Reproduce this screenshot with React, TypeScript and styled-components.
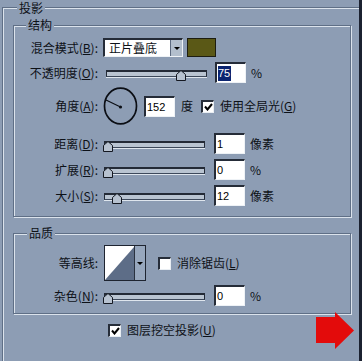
import React from "react";
import styled, { createGlobalStyle, css } from "styled-components";

const BG = "#8d9db4";
const DARK = "#5f6f86";
const LIGHT = "#dbe3ec";
const INK = "#0d1117";

const Global = createGlobalStyle`
  html, body { margin: 0; padding: 0; background: ${BG}; }
  body {
    font-family: "Noto Sans CJK SC", "Noto Sans", sans-serif;
    font-size: 12px;
    color: ${INK};
  }
`;

const etched = css`
  border: 1px solid ${DARK};
  box-shadow: inset 1px 1px 0 ${LIGHT}, 1px 1px 0 ${LIGHT};
`;

const sunken = css`
  border-style: solid;
  border-width: 2px 1px 1px 2px;
  border-color: #252c38 #eef2f6 #eef2f6 #252c38;
  background: #fff;
`;

const Page = styled.div`
  position: relative;
  width: 362px;
  height: 361px;
  box-sizing: border-box;
  overflow: hidden;
  background: ${BG};
  padding: 7px 0 0 2px;
  border-right: 3px solid #1b2130;
`;

const OuterGroup = styled.section`
  display: flex;
  flex-direction: column;
  box-sizing: border-box;
  height: 360px;
  border-top: 1px solid ${DARK};
  border-left: 1px solid ${DARK};
  box-shadow: inset 1px 1px 0 ${LIGHT};
  padding-left: 10px;
`;

const GroupTitle = styled.div<{ $ml: number; $mt?: number }>`
  align-self: flex-start;
  margin: ${(p) => p.$mt ?? -7}px 0 0 ${(p) => p.$ml}px;
  padding: 0 2px;
  height: 12px;
  line-height: 12px;
  background: ${BG};
  white-space: nowrap;
`;

const Group = styled.section<{ $h: number; $mt: number }>`
  display: flex;
  flex-direction: column;
  box-sizing: border-box;
  flex: none;
  width: 338px;
  height: ${(p) => p.$h}px;
  margin-top: ${(p) => p.$mt}px;
  ${etched}
`;

const Row = styled.div<{ $h: number; $mt: number }>`
  display: flex;
  align-items: center;
  flex: none;
  height: ${(p) => p.$h}px;
  margin-top: ${(p) => p.$mt}px;
`;

const Label = styled.span`
  flex: none;
  width: 84px;
  text-align: right;
  white-space: nowrap;
  line-height: 12px;
`;

const Text = styled.span<{ $ml: number }>`
  flex: none;
  margin-left: ${(p) => p.$ml}px;
  white-space: nowrap;
  line-height: 12px;
`;

const Select = styled.div`
  display: flex;
  flex: none;
  width: 80px;
  height: 19px;
  margin-left: 5px;
  box-sizing: border-box;
  ${sunken}
`;

const SelectText = styled.span`
  flex: 1;
  padding-left: 4px;
  line-height: 16px;
  white-space: nowrap;
`;

const SelectButton = styled.span`
  display: flex;
  align-items: center;
  justify-content: center;
  width: 11px;
  background: #b3bfcd;
  border-left: 1px solid #5c6a80;
`;

const DownArrow = styled.span`
  width: 0;
  height: 0;
  border-left: 3px solid transparent;
  border-right: 3px solid transparent;
  border-top: 3px solid #000;
`;

const Swatch = styled.div`
  flex: none;
  width: 29px;
  height: 19px;
  margin-left: 4px;
  box-sizing: border-box;
  background: #5a5816;
  border: 1px solid #1d1d10;
`;

const SliderBox = styled.div<{ $ml: number }>`
  position: relative;
  flex: none;
  width: 101px;
  height: 21px;
  margin-left: ${(p) => p.$ml}px;
  box-sizing: border-box;
  padding-top: 8px;
`;

const Track = styled.div`
  height: 7px;
  box-sizing: border-box;
  border: 1px solid #232a36;
  border-top-width: 2px;
  border-bottom-color: #3c485a;
  background: #b9c4d1;
  box-shadow: 0 1px 0 #dfe6ee;
`;

const ThumbSvg = styled.svg`
  position: absolute;
  top: 8px;
`;

const NumBox = styled.div<{ $ml: number }>`
  display: flex;
  align-items: center;
  flex: none;
  width: 31px;
  height: 21px;
  margin-left: ${(p) => p.$ml}px;
  box-sizing: border-box;
  padding-left: 1px;
  ${sunken}
  font: 11px "Liberation Sans", Arial, sans-serif;
  color: #000;
`;

const Selected = styled.span`
  background: #0b2470;
  color: #fff;
  line-height: 15px;
  padding-right: 1px;
`;

const Unit = styled.span`
  flex: none;
  margin-left: 5px;
  white-space: nowrap;
  line-height: 12px;
`;

const Dial = styled.svg`
  flex: none;
  margin-left: 5px;
`;

const CheckBox = styled.span<{ $ml: number }>`
  display: flex;
  align-items: center;
  justify-content: center;
  flex: none;
  width: 13px;
  height: 13px;
  margin-left: ${(p) => p.$ml}px;
  box-sizing: border-box;
  border-style: solid;
  border-width: 2px 1px 1px 2px;
  border-color: #262d39 #e9eef3 #e9eef3 #262d39;
  background: #fff;
`;

const Contour = styled.div`
  display: flex;
  flex: none;
  width: 42px;
  height: 36px;
  margin-left: 6px;
  box-sizing: border-box;
  border: 1px solid #1e2430;
`;

const ContourButton = styled.span`
  display: flex;
  align-items: center;
  justify-content: center;
  flex: 1;
  background: #97a7bd;
  border-left: 1px solid #2a3240;
`;

const RedArrow = styled.svg`
  position: absolute;
  left: 316px;
  top: 312px;
`;

const Mn = styled.u`
  text-underline-offset: 1px;
`;

function Slider({ ml, pos }: { ml: number; pos: number }) {
  return (
    <SliderBox $ml={ml}>
      <Track />
      <ThumbSvg width="10" height="11" viewBox="0 0 10 11" style={{ left: pos }}>
        <polygon
          points="0.5,10.5 0.5,4.5 5,0.5 9.5,4.5 9.5,10.5"
          fill="#b7c2d0"
          stroke="#141821"
          strokeWidth="1"
        />
      </ThumbSvg>
    </SliderBox>
  );
}

function Tick() {
  return (
    <svg width="9" height="8" viewBox="0 0 9 8">
      <polyline points="1,3.5 3.5,6.5 8,1" fill="none" stroke="#000" strokeWidth="2" />
    </svg>
  );
}

const sliders = [
  { key: "distance", label: "距离", m: "D", value: "1", unit: "像素", pos: -1 },
  { key: "spread", label: "扩展", m: "R", value: "0", unit: "%", pos: -1 },
  { key: "size", label: "大小", m: "S", value: "12", unit: "像素", pos: 8 },
];

export default function App() {
  return (
    <>
      <Global />
      <Page>
        <OuterGroup>
          <GroupTitle $ml={4} $mt={-6}>投影</GroupTitle>
          <Group $h={192} $mt={11}>
            <GroupTitle $ml={12}>结构</GroupTitle>
            <Row $h={19} $mt={7}>
              <Label>
                混合模式(<Mn>B</Mn>):
              </Label>
              <Select>
                <SelectText>正片叠底</SelectText>
                <SelectButton>
                  <DownArrow />
                </SelectButton>
              </Select>
              <Swatch />
            </Row>
            <Row $h={21} $mt={5}>
              <Label>
                不透明度(<Mn>O</Mn>):
              </Label>
              <Slider ml={8} pos={70} />
              <NumBox $ml={8}>
                <Selected>75</Selected>
              </NumBox>
              <Unit>%</Unit>
            </Row>
            <Row $h={38} $mt={4}>
              <Label>
                角度(<Mn>A</Mn>):
              </Label>
              <Dial width="35" height="38" viewBox="0 0 35 38">
                <ellipse cx="17.5" cy="19" rx="16" ry="17.8" fill="none" stroke="#0b0e14" strokeWidth="1.7" />
                <line x1="17.5" y1="20" x2="3" y2="13" stroke="#0b0e14" strokeWidth="1.2" />
                <circle cx="17.5" cy="20" r="1.6" fill="#0b0e14" />
              </Dial>
              <NumBox $ml={6}>152</NumBox>
              <Text $ml={6}>度</Text>
              <CheckBox $ml={8}>
                <Tick />
              </CheckBox>
              <Text $ml={6}>
                使用全局光(<Mn>G</Mn>)
              </Text>
            </Row>
            {sliders.map((s, i) => (
              <Row key={s.key} $h={21} $mt={i === 0 ? 8 : 5}>
                <Label>
                  {s.label}(<Mn>{s.m}</Mn>):
                </Label>
                <Slider ml={6} pos={s.pos} />
                <NumBox $ml={9}>{s.value}</NumBox>
                <Unit>{s.unit}</Unit>
              </Row>
            ))}
          </Group>
          <Group $h={81} $mt={16}>
            <GroupTitle $ml={13}>品质</GroupTitle>
            <Row $h={36} $mt={6}>
              <Label>等高线:</Label>
              <Contour>
                <svg width="29" height="34" viewBox="0 0 29 34">
                  <rect width="29" height="34" fill="#fff" />
                  <polygon points="0,34 29,1 29,34" fill="#5d6d87" />
                </svg>
                <ContourButton>
                  <DownArrow />
                </ContourButton>
              </Contour>
              <CheckBox $ml={12} />
              <Text $ml={6}>
                消除锯齿(<Mn>L</Mn>)
              </Text>
            </Row>
            <Row $h={21} $mt={4}>
              <Label>
                杂色(<Mn>N</Mn>):
              </Label>
              <Slider ml={6} pos={-1} />
              <NumBox $ml={9}>0</NumBox>
              <Unit>%</Unit>
            </Row>
          </Group>
          <Row $h={14} $mt={9}>
            <CheckBox $ml={95}>
              <Tick />
            </CheckBox>
            <Text $ml={6}>
              图层挖空投影(<Mn>U</Mn>)
            </Text>
          </Row>
        </OuterGroup>
        <RedArrow width="39" height="38" viewBox="0 0 39 38">
          <polygon points="0,5 19,5 19,0 38,18.5 19,37 19,31 0,31" fill="#e30b0b" />
        </RedArrow>
      </Page>
    </>
  );
}
